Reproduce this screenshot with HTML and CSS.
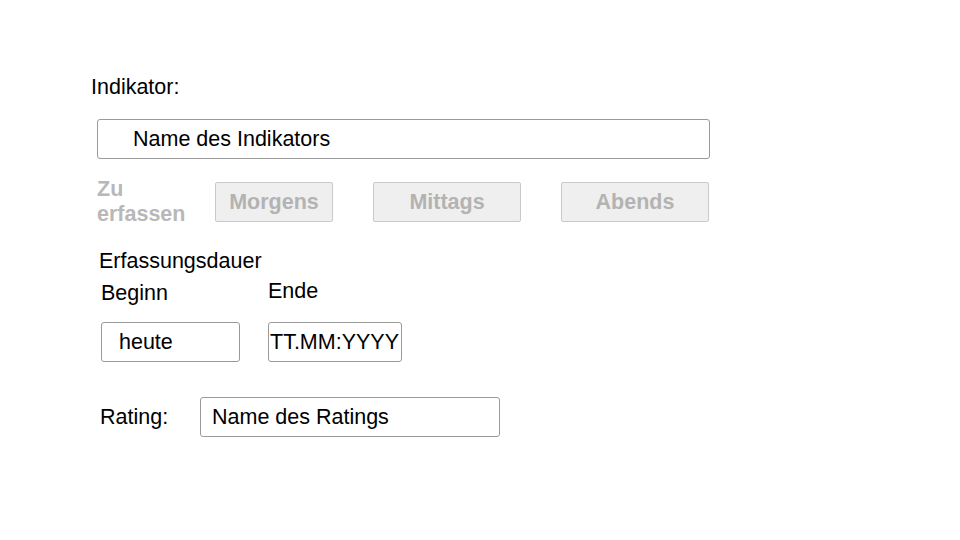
FILE: index.html
```html
<!DOCTYPE html>
<html lang="de">
<head>
<meta charset="utf-8">
<title>Indikator</title>
<link rel="stylesheet" href="styles.css">
</head>
<body>
<div class="form">
  <div class="label indikator-label">Indikator:</div>
  <div class="field name-field">Name des Indikators</div>
  <div class="times-row">
    <div class="times-label">Zu<br>erfassen</div>
    <div class="btn btn-morgens">Morgens</div>
    <div class="btn btn-mittags">Mittags</div>
    <div class="btn btn-abends">Abends</div>
  </div>
  <div class="label dauer-label">Erfassungsdauer</div>
  <div class="dauer-row">
    <div class="dauer-col col-beginn">
      <div class="label beginn-label">Beginn</div>
      <div class="field beginn-field">heute</div>
    </div>
    <div class="dauer-col col-ende">
      <div class="label ende-label">Ende</div>
      <div class="field ende-field">TT.MM:YYYY</div>
    </div>
  </div>
  <div class="rating-row">
    <div class="label rating-label">Rating:</div>
    <div class="field rating-field">Name des Ratings</div>
  </div>
</div>
</body>
</html>
```

FILE: styles.css
```css
html, body {
  margin: 0;
  padding: 0;
  background: #fff;
}
body {
  width: 960px;
  height: 540px;
  overflow: hidden;
  font-family: "Liberation Sans", Arial, sans-serif;
  font-size: 21.5px;
  line-height: 25px;
  color: #000;
}
.form {
  padding-top: 75px;
}
.label {
  white-space: nowrap;
}
.indikator-label {
  margin-left: 91px;
}
.field {
  box-sizing: border-box;
  border: 1px solid #9a9a9a;
  border-radius: 3px;
  background: #fff;
  height: 40px;
  display: flex;
  align-items: center;
  white-space: nowrap;
  overflow: hidden;
}
.name-field {
  margin-top: 19px;
  margin-left: 97px;
  width: 613px;
  padding-left: 35px;
}
.times-row {
  margin-top: 18px;
  margin-left: 97px;
  display: flex;
  align-items: center;
}
.times-label {
  width: 118px;
  font-weight: bold;
  color: #b8b8b8;
}
.btn {
  box-sizing: border-box;
  height: 40px;
  border: 1px solid #c9c9c9;
  border-radius: 2px;
  background: #efefef;
  color: #b3b3b3;
  font-weight: bold;
  display: flex;
  align-items: center;
  justify-content: center;
}
.btn + .btn {
  margin-left: 40px;
}
.btn-morgens { width: 118px; }
.btn-mittags { width: 148px; }
.btn-abends { width: 148px; }
.dauer-label {
  margin-top: 22px;
  margin-left: 99px;
}
.dauer-row {
  display: flex;
  margin-left: 101px;
  gap: 28px;
}
.col-beginn .beginn-label {
  margin-top: 7px;
}
.col-ende .ende-label {
  margin-top: 5px;
}
.beginn-field {
  margin-top: 16px;
  width: 139px;
  padding-left: 17px;
}
.ende-field {
  margin-top: 18px;
  width: 134px;
  padding-left: 1px;
}
.rating-row {
  display: flex;
  align-items: center;
  margin-top: 35px;
  margin-left: 100px;
}
.rating-label {
  width: 100px;
}
.rating-field {
  width: 300px;
  padding-left: 11px;
}
```
